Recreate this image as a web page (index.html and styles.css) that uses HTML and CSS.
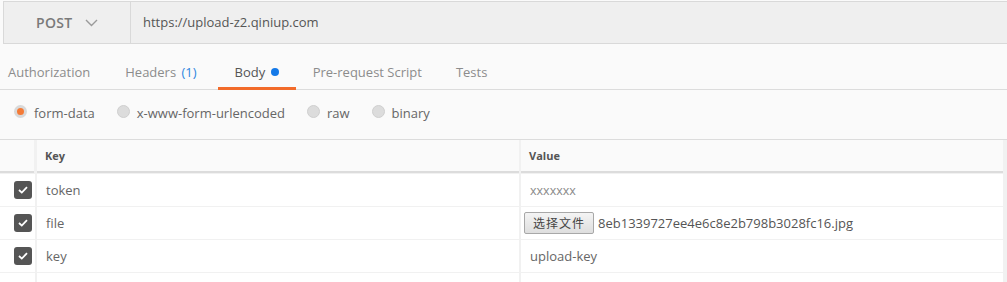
FILE: index.html
```html
<!DOCTYPE html>
<html>
<head>
<meta charset="utf-8">
<link rel="stylesheet" href="styles.css">
</head>
<body>
<div class="urlbar">
  <div class="method">
    <span class="method-name">POST</span>
    <svg class="chev" width="13" height="8" viewBox="0 0 13 8"><path d="M1 1 L6.5 6.5 L12 1" fill="none" stroke="#9a9a9a" stroke-width="1.4"/></svg>
  </div>
  <div class="url">https://upload-z2.qiniup.com</div>
</div>
<div class="tabs">
  <div class="tab">Authorization</div>
  <div class="tab">Headers <span class="count">(1)</span></div>
  <div class="tab active">Body <span class="dot"></span></div>
  <div class="tab">Pre-request Script</div>
  <div class="tab">Tests</div>
</div>
<div class="modes">
  <label class="mode"><span class="radio on"></span>form-data</label>
  <label class="mode"><span class="radio"></span>x-www-form-urlencoded</label>
  <label class="mode"><span class="radio"></span>raw</label>
  <label class="mode"><span class="radio"></span>binary</label>
</div>
<div class="grid">
  <div class="cell head"></div>
  <div class="cell head th">Key</div>
  <div class="cell head th">Value</div>

  <div class="cell chk"><span class="box"><svg width="10" height="8" viewBox="0 0 10 8"><path d="M1 4 L3.8 6.6 L9 1.2" fill="none" stroke="#fff" stroke-width="1.8"/></svg></span></div>
  <div class="cell key">token</div>
  <div class="cell val muted">xxxxxxx</div>

  <div class="cell chk"><span class="box"><svg width="10" height="8" viewBox="0 0 10 8"><path d="M1 4 L3.8 6.6 L9 1.2" fill="none" stroke="#fff" stroke-width="1.8"/></svg></span></div>
  <div class="cell key">file</div>
  <div class="cell val file"><span class="filebtn">选择文件</span><span class="fname">8eb1339727ee4e6c8e2b798b3028fc16.jpg</span></div>

  <div class="cell chk"><span class="box"><svg width="10" height="8" viewBox="0 0 10 8"><path d="M1 4 L3.8 6.6 L9 1.2" fill="none" stroke="#fff" stroke-width="1.8"/></svg></span></div>
  <div class="cell key">key</div>
  <div class="cell val">upload-key</div>

  <div class="cell"></div>
  <div class="cell"></div>
  <div class="cell"></div>
</div>
</body>
</html>
```

FILE: styles.css
```css
* { box-sizing: border-box; }
html, body { margin: 0; padding: 0; }
body {
  background: #fafafa;
  font-family: "Open Sans", "Noto Sans CJK SC", sans-serif;
  font-size: 13px;
  color: #555;
  width: 1007px;
  height: 282px;
  overflow: hidden;
}
.urlbar {
  display: flex;
  margin: 1px 0 0 3px;
  height: 43px;
  background: #efefef;
  border: 1px solid #d9d9d9;
  border-right: none;
}
.method {
  width: 127px;
  flex: none;
  border-right: 1px solid #d9d9d9;
  display: flex;
  align-items: center;
  padding-left: 32px;
}
.method-name {
  font-size: 14px;
  font-weight: 600;
  color: #7a7a7a;
  letter-spacing: 0.3px;
}
.chev { margin-left: 13px; margin-top: 1px; }
.url {
  display: flex;
  align-items: center;
  padding-left: 12px;
  color: #555;
  font-size: 13px;
  padding-bottom: 2px;
}
.tabs {
  display: flex;
  height: 46px;
  border-bottom: 1px solid #dcdcdc;
}
.tab {
  padding: 18px 17px 0;
  line-height: 20px;
  color: #8c8c8c;
  font-size: 13px;
  height: 46px;
}
.tab:first-child { padding-left: 8px; padding-right: 18px; }
.tab.active {
  color: #555;
  border-bottom: 3px solid #f26b2a;
}
.count { color: #2e86de; margin-left: 2px; margin-right: 4px; }
.dot {
  display: inline-block;
  width: 8px;
  height: 8px;
  border-radius: 50%;
  background: #1479e8;
  margin-left: 2px;
  vertical-align: 1px;
}
.modes {
  display: flex;
  align-items: center;
  height: 50px;
  border-bottom: 1px solid #dcdcdc;
  padding-left: 14px;
  padding-bottom: 3px;
  gap: 22px;
}
.mode {
  display: flex;
  align-items: center;
  color: #666;
  font-size: 13px;
}
.radio {
  width: 13px;
  height: 13px;
  border-radius: 50%;
  background: #dcdcdc;
  border: 1px solid #cfcfcf;
  margin-right: 7px;
  margin-top: -4px;
}
.radio.on {
  background: #f47a36;
  border: 3px solid #d9d9d9;
}
.grid {
  display: grid;
  grid-template-columns: 35px 482px 482px;
  grid-template-rows: 33px 32px 32px 32px 20px;
  column-gap: 2px;
  row-gap: 1px;
  padding-right: 3px;
  background: #f1f1f1;
}
.grid > .cell:nth-child(1) { margin-right: 1px; }
.cell {
  background: #fff;
  display: flex;
  align-items: center;
}
.head {
  background: #fafafa;
  border-bottom: 2px solid #dcdcdc;
}
.th {
  font-size: 11px;
  font-weight: 700;
  color: #555;
  padding-left: 8px;
}
.chk { padding-left: 14px; }
.box {
  width: 18px;
  height: 18px;
  border-radius: 3px;
  background: #555;
  display: flex;
  align-items: center;
  justify-content: center;
}
.key { padding-left: 9px; color: #666; }
.val { padding-left: 9px; color: #666; }
.muted { color: #8a8a8a; font-size: 12.5px; }
.val.file { padding-left: 3px; }
.filebtn {
  font-family: "Noto Sans CJK SC", sans-serif;
  font-size: 12px;
  color: #444;
  height: 22px;
  line-height: 20px;
  padding: 0 8px;
  border: 1px solid #a8a8a8;
  border-radius: 2px;
  background: linear-gradient(#f4f4f4, #dedede);
  letter-spacing: 1px;
}
.fname { margin-left: 4px; color: #555; }
```
